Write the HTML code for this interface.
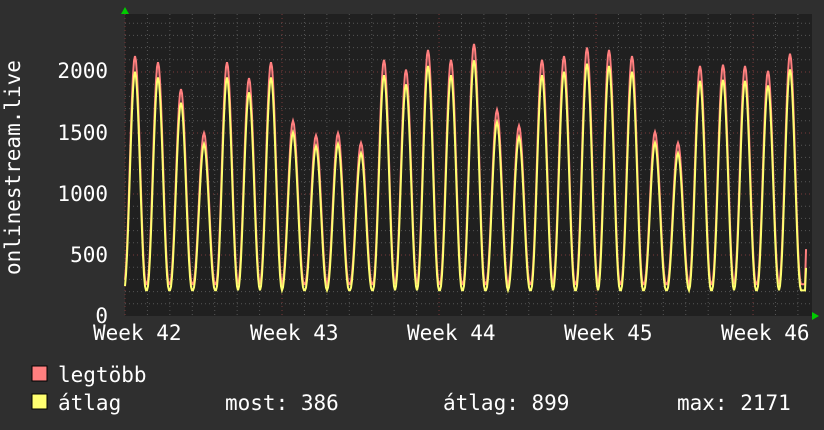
<!DOCTYPE html>
<html><head><meta charset="utf-8"><style>
html,body{margin:0;padding:0;background:#2f2f2f;}
svg{display:block}
text{font-family:"DejaVu Sans Mono","Liberation Mono",monospace;fill:#fff;font-size:21px}
</style></head><body>
<svg id="g" width="824" height="430" viewBox="0 0 824 430" xmlns="http://www.w3.org/2000/svg">
<rect width="824" height="430" fill="#2f2f2f"/>
<rect x="125" y="14" width="687" height="302" fill="#202020"/>
<g id="grid"></g>
<path id="red" fill="none" stroke="#ff7f7f" stroke-width="2"/>
<path id="yel" fill="none" stroke="#ffff70" stroke-width="2"/>
<polygon points="121,14 125,7 129,14" fill="#00cc00"/>
<polygon points="812,312 819,316 812,320" fill="#00cc00"/>
<g text-anchor="end">
<text x="108" y="78">2000</text>
<text x="108" y="140">1500</text>
<text x="108" y="201">1000</text>
<text x="108" y="262">500</text>
<text x="108" y="323">0</text>
</g>
<text transform="translate(20,275) rotate(-90)">onlinestream.live</text>
<text x="93" y="340">Week 42</text>
<text x="250" y="340">Week 43</text>
<text x="407" y="340">Week 44</text>
<text x="564" y="340">Week 45</text>
<text x="721" y="340">Week 46</text>
<rect x="32" y="366" width="15" height="15" fill="#ff7f7f" stroke="#000"/>
<rect x="32" y="394" width="15" height="15" fill="#ffff70" stroke="#000"/>
<text x="58" y="382">legtöbb</text>
<text x="58" y="410">átlag</text>
<text x="225" y="410">most: 386</text>
<text x="443" y="410">átlag: 899</text>
<text x="677" y="410">max: 2171</text>
</svg>
<script>
var g=document.getElementById("grid"),s="";
function Y(v){return 316-v*0.122;}
for(var v=100;v<=2400;v+=100){var y=Y(v),maj=v%500==0;
s+='<line x1="125" x2="812" y1="'+y+'" y2="'+y+'" stroke="'+(maj?'#7a3a3a':'#555')+'" stroke-dasharray="1,3"/>';}
for(var x=125;x<=812;x+=22.43){var r=((x-125)/157)%1;var w=r<0.01||r>0.99;
s+='<line y1="14" y2="316" x1="'+x+'" x2="'+x+'" stroke="'+(w?'#7a3a3a':'#555')+'" stroke-dasharray="1,3"/>';}
g.innerHTML=s;
var peaks=[[135,2130],[158,2080],[181,1860],[204,1500],[227,2080],[249,1950],[271,2080],[293,1600],[316,1480],[338,1500],[361,1420],[384,2100],[406,2020],[428,2180],[451,2100],[474,2230],[497,1690],[519,1560],[542,2100],[564,2130],[587,2200],[609,2180],[632,2130],[655,1510],[678,1420],[700,2050],[723,2060],[745,2050],[768,2010],[790,2150]];
function val(x,yel){var best=0;for(var i=0;i<peaks.length;i++){var d=(x-peaks[i][0])/11.2;if(Math.abs(d)<1.5){var c=Math.cos(Math.min(Math.abs(d),1)*Math.PI/2);var f=Math.pow(c,2.2);var pk=peaks[i][1]*(yel?0.94:1);var mn=yel?210:260;var vv=mn+(pk-mn)*f;if(vv>best)best=vv;}}return best||(yel?210:260);}
["red","yel"].forEach(function(id){var d="";for(var x=125;x<=807;x+=1){var v=val(x,id=="yel");if(x>=806)v=id=="yel"?386:540;d+=(x==125?"M":"L")+x+","+Y(v).toFixed(1);}document.getElementById(id).setAttribute("d",d);});
</script>
</body></html>
